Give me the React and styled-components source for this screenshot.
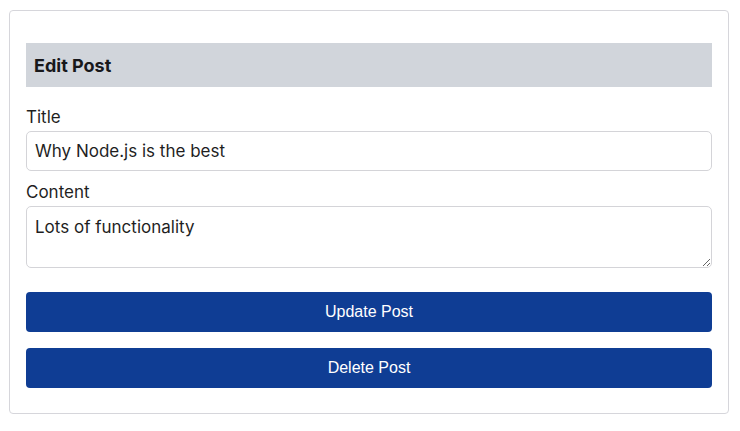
import React from "react";
import styled, { createGlobalStyle } from "styled-components";

const GlobalStyle = createGlobalStyle`
  body {
    margin: 0;
    background: #ffffff;
    font-family: Inter, "Noto Sans", sans-serif;
    color: #1f1f1f;
  }
`;

const Page = styled.div`
  padding: 10px 11px 0 9px;
`;

const Card = styled.form`
  border: 1px solid #d6d6db;
  border-radius: 4px;
  padding: 32px 16px 25px;
  display: flex;
  flex-direction: column;
`;

const Heading = styled.h2`
  margin: 0 0 19px;
  background: #d1d5db;
  height: 44px;
  display: flex;
  align-items: center;
  padding: 0 8px;
  font-size: 18px;
  font-weight: 700;
  color: #18181b;
`;

const Label = styled.label`
  font-size: 17px;
  line-height: 22px;
  margin-bottom: 3px;
  color: #1f1f1f;
`;

const Field = styled.input`
  font: inherit;
  font-size: 17px;
  height: 40px;
  box-sizing: border-box;
  border: 1px solid #d4d4d8;
  border-radius: 5px;
  padding: 0 8px;
  margin-bottom: 10px;
  color: #1f1f1f;
  outline: none;
`;

const Area = styled.textarea`
  font: inherit;
  font-size: 17px;
  line-height: 22px;
  height: 62px;
  box-sizing: border-box;
  border: 1px solid #d4d4d8;
  border-radius: 5px;
  padding: 9px 8px 7px;
  margin-bottom: 24px;
  color: #1f1f1f;
  outline: none;
  resize: vertical;
`;

const Button = styled.button`
  height: 40px;
  border: none;
  border-radius: 4px;
  background: #0f3d94;
  color: #ffffff;
  font-family: "Liberation Sans", Arial, sans-serif;
  font-size: 16px;
  margin-bottom: ${(p) => (p.$last ? "0" : "16px")};
  cursor: pointer;
`;

export default function App() {
  return (
    <>
      <GlobalStyle />
      <Page>
        <Card onSubmit={(e) => e.preventDefault()}>
          <Heading>Edit Post</Heading>
          <Label htmlFor="title">Title</Label>
          <Field id="title" defaultValue="Why Node.js is the best" />
          <Label htmlFor="content">Content</Label>
          <Area id="content" defaultValue="Lots of functionality" />
          <Button type="button">Update Post</Button>
          <Button type="button" $last>
            Delete Post
          </Button>
        </Card>
      </Page>
    </>
  );
}
